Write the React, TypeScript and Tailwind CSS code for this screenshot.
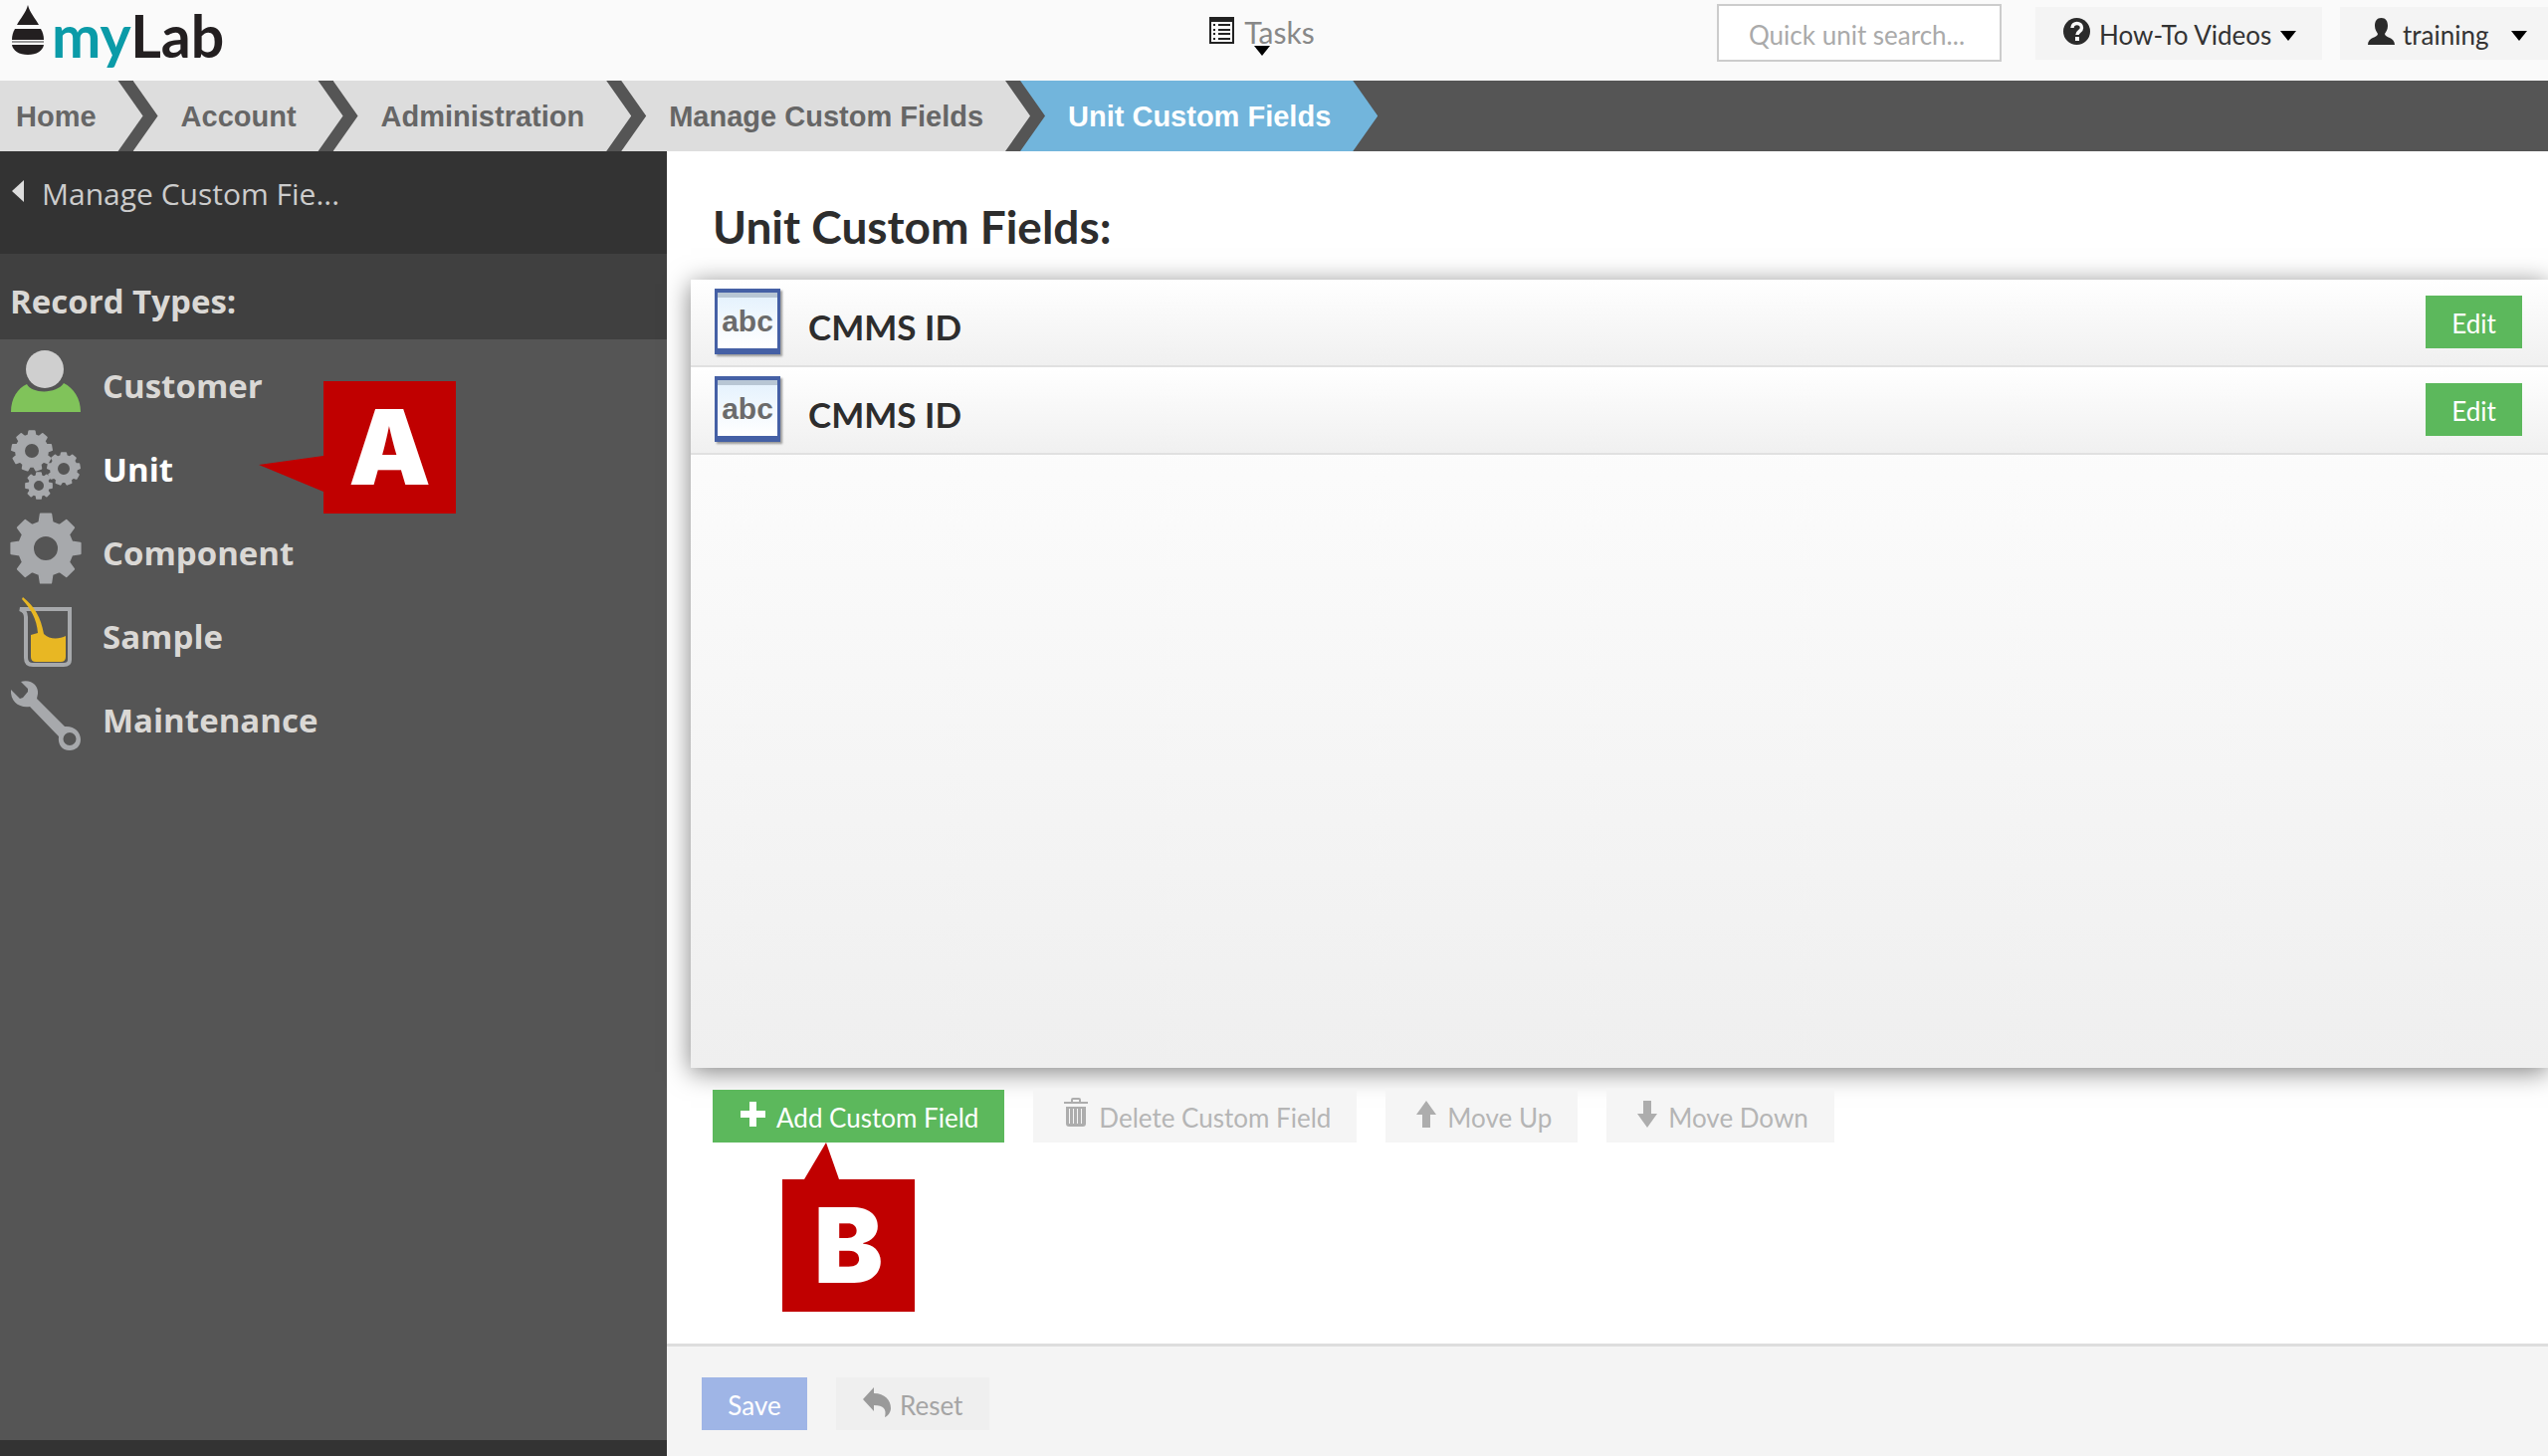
import type { ReactNode } from "react";

const crumbs = ["Home", "Account", "Administration", "Manage Custom Fields", "Unit Custom Fields"];

const fields = [
  { id: 1, name: "CMMS ID" },
  { id: 2, name: "CMMS ID" },
];

function gearPath(cx: number, cy: number, outer: number, inner: number, teeth: number) {
  const step = (Math.PI * 2) / teeth;
  const points: string[] = [];
  for (let i = 0; i < teeth; i++) {
    const mid = i * step - Math.PI / 2;
    const corners: [number, number][] = [
      [inner, -0.31],
      [outer, -0.19],
      [outer, 0.19],
      [inner, 0.31],
    ];
    for (const [r, offset] of corners) {
      const a = mid + offset * step;
      points.push(`${(cx + r * Math.cos(a)).toFixed(2)} ${(cy + r * Math.sin(a)).toFixed(2)}`);
    }
  }
  return `M${points.join("L")}Z`;
}

function holePath(cx: number, cy: number, r: number) {
  return `M${cx - r} ${cy}a${r} ${r} 0 1 0 ${r * 2} 0a${r} ${r} 0 1 0 ${-r * 2} 0Z`;
}

function Gear({ cx, cy, outer, inner, hole, teeth }: {
  cx: number; cy: number; outer: number; inner: number; hole: number; teeth: number;
}) {
  return (
    <path
      d={gearPath(cx, cy, outer - 1, inner, teeth) + holePath(cx, cy, hole + 1)}
      fill="#a7a9ac"
      fillRule="evenodd"
      stroke="#a7a9ac"
      strokeWidth="2"
      strokeLinejoin="round"
    />
  );
}

function RecordIcon({ children }: { children: ReactNode }) {
  return (
    <svg viewBox="0 0 70 70" className="w-[70px] h-[70px] shrink-0 overflow-visible" aria-hidden="true">
      {children}
    </svg>
  );
}

const recordTypes = [
  {
    name: "Customer",
    icon: (
      <RecordIcon>
        <path d="M0 66C0 52 7 42 16 38C21 48 46 48 53 37C63 42 70 52 70 66Z" fill="#80c35a" />
        <circle cx="34" cy="23" r="19" fill="#cfcfcf" />
      </RecordIcon>
    ),
  },
  {
    name: "Unit",
    active: true,
    icon: (
      <RecordIcon>
        <Gear cx={21} cy={21} outer={21} inner={16} hole={7} teeth={9} />
        <Gear cx={53} cy={39} outer={17} inner={13} hole={6} teeth={9} />
        <Gear cx={28} cy={56} outer={14} inner={10} hole={5} teeth={8} />
      </RecordIcon>
    ),
  },
  {
    name: "Component",
    icon: (
      <RecordIcon>
        <Gear cx={35} cy={35} outer={36} inner={27} hole={12} teeth={8} />
      </RecordIcon>
    ),
  },
  {
    name: "Sample",
    icon: (
      <RecordIcon>
        <path d="M9 12H59V63Q59 68 53 68H22Q15 68 15 61V20Q15 14 9 12Z" fill="none" stroke="#a7a9ac" strokeWidth="4" />
        <path d="M12 0C24 10 30 20 33 37C39 43 49 42 55 39V60Q55 65 50 65H25Q20 65 20 60V38L27 36C26 22 20 12 11 2Z" fill="#e8b723" />
      </RecordIcon>
    ),
  },
  {
    name: "Maintenance",
    icon: (
      <RecordIcon>
        <path
          d="M10 1C20 -2 28 5 27 13L26 18L54 46C63 45 70 51 70 59C70 66 65 70 59 70C51 70 47 64 48 56L19 26C9 28 -1 21 0 9L9 18L12 17L17 11V8ZM59 52A6 6 0 1 0 59 65A6 6 0 1 0 59 52Z"
          fill="#a7a9ac"
          fillRule="evenodd"
        />
      </RecordIcon>
    ),
  },
];

function Caret() {
  return (
    <svg viewBox="0 0 16 10" className="w-4 h-[10px] shrink-0 fill-black" aria-hidden="true">
      <path d="M0 0H16L8 10Z" />
    </svg>
  );
}

function Crumb({ label, first, last }: { label: string; first: boolean; last: boolean }) {
  const shape = first
    ? "pl-4 [clip-path:polygon(0_0,calc(100%_-_25px)_0,100%_50%,calc(100%_-_25px)_100%,0_100%)]"
    : "pl-12 -ml-[10px] [clip-path:polygon(0_0,calc(100%_-_25px)_0,100%_50%,calc(100%_-_25px)_100%,0_100%,25px_50%)]";
  const color = last ? "bg-[#72b5dc] text-white" : "bg-[#dddddd] text-[#666666]";
  return (
    <li className={`h-[71px] pr-[47px] pt-0.5 flex items-center ${shape} ${color}`}>
      <a href="#" aria-current={last ? "page" : undefined}>{label}</a>
    </li>
  );
}

function Header() {
  return (
    <header className="h-[81px] bg-[#fafafa] grid grid-cols-[1fr_auto_1fr]">
      <a href="#" className="flex items-start pl-3" aria-label="myLab">
        <svg viewBox="0 0 32 50" className="w-8 h-[50px] mt-[5px] shrink-0" aria-hidden="true">
          <path d="M16 0C18 8 24 14 27 20H5C8 14 14 8 16 0Z" fill="#231f20" />
          <path d="M3 24H29C31 27 32 31 32 35H0C0 31 1 27 3 24Z" fill="#231f20" />
          <path d="M0 36H32V38H0Z" fill="#999999" />
          <path d="M0 40H32C31 46 25 50 16 50C7 50 1 46 0 40Z" fill="#231f20" />
        </svg>
        <span className="pl-2 text-[59px] leading-[72px] font-bold text-[#231f20]">
          <span className="text-[#0b9ba8]">my</span>Lab
        </span>
      </a>
      <nav className="pr-6">
        <a href="#" className="relative flex items-start gap-[10px] pt-[14px] text-[30px] leading-9 text-[#888888]">
          <svg viewBox="0 0 25 27" className="w-[25px] h-[27px] mt-[3px]" aria-hidden="true">
            <path d="M0 0H25V27H0ZM2 5V25H23V5Z" fill="#222222" fillRule="evenodd" />
            <path d="M4 7H6V9H4ZM9 7H21V9H9ZM4 12H6V14H4ZM9 12H21V14H9ZM4 16H6V18H4ZM9 16H21V18H9ZM4 21H6V23H4ZM9 21H21V23H9Z" fill="#222222" />
          </svg>
          Tasks
          <span className="absolute left-[45px] top-[46px] flex">
            <Caret />
          </span>
        </a>
      </nav>
      <div className="flex justify-end items-start text-[26px] text-[#333333]">
        <input
          type="text"
          aria-label="Quick unit search"
          placeholder="Quick unit search..."
          className="mt-1 mr-[34px] w-[286px] h-[58px] px-[30px] pt-1 border-2 border-[#cccccc] bg-white placeholder:text-[#aaaaaa]"
        />
        <button className="mt-[7px] mr-[18px] w-[288px] h-[53px] pl-7 bg-[#f4f4f4] flex items-center gap-[9px]">
          <svg viewBox="0 0 27 27" className="w-[27px] h-[27px] shrink-0 mb-1" aria-hidden="true">
            <circle cx="13.5" cy="13.5" r="13.5" fill="#2b2b2b" />
            <path d="M9 10C9 4 18.500 4 18.500 10C18.500 13.500 14 13.500 14 17" fill="none" stroke="#fafafa" strokeWidth="3.500" />
            <path d="M12 19H16V23H12Z" fill="#fafafa" />
          </svg>
          <span className="pt-1">How-To Videos</span>
          <span className="pt-1">
            <Caret />
          </span>
        </button>
        <button className="mt-[7px] w-[209px] h-[53px] pl-7 bg-[#f4f4f4] flex items-center gap-2">
          <svg viewBox="0 0 27 27" className="w-[27px] h-[27px] shrink-0 mb-1" aria-hidden="true">
            <path d="M13.500 0C18 0 20 3 20 8C20 12 18 14 17 16C17 20 27 19 27 27H0C0 19 10 20 10 16C9 14 7 12 7 8C7 3 9 0 13.500 0Z" fill="#2b2b2b" />
          </svg>
          <span className="pt-1">training</span>
          <span className="ml-[14px] pt-1">
            <Caret />
          </span>
        </button>
      </div>
    </header>
  );
}

function Sidebar() {
  return (
    <aside className="w-[670px] shrink-0 bg-[#555555] border-b-[16px] border-[#333333]">
      <a
        href="#"
        className="h-[103px] pl-3 pt-[25px] flex items-start gap-[18px] bg-[#333333] font-['Open_Sans',sans-serif] text-[30px] leading-9 text-[#cccccc]"
      >
        <svg viewBox="0 0 12 22" className="w-3 h-[22px] mt-1 fill-[#dddddd]" aria-hidden="true">
          <path d="M12 0V22L0 11Z" />
        </svg>
        Manage Custom Fie...
      </a>
      <h2 className="h-[86px] pl-[10px] pt-[10px] flex items-center bg-[#404040] font-['Open_Sans',sans-serif] text-[33px] font-bold text-[#dad8d5]">
        Record Types:
      </h2>
      <ul className="font-['Open_Sans',sans-serif] text-[33px] font-bold">
        {recordTypes.map((type) => (
          <li key={type.name} className="h-[84px] flex items-center">
            <a
              href="#"
              className={`relative pl-[11px] flex items-center gap-[22px] ${type.active ? "text-white" : "text-[#dad8d5]"}`}
            >
              {type.icon}
              <span className="pt-[10px]">{type.name}</span>
              {type.active && (
                <span className="absolute left-[260px] -top-[49px] flex">
                  <svg viewBox="0 0 65 133" className="w-[65px] h-[133px]" aria-hidden="true">
                    <path d="M0 84L65 75V111Z" fill="#c00000" />
                  </svg>
                  <Marker letter="A" />
                </span>
              )}
            </a>
          </li>
        ))}
      </ul>
    </aside>
  );
}

function Marker({ letter }: { letter: string }) {
  return (
    <span className="w-[133px] h-[133px] flex items-center justify-center bg-[#c00000] font-['Inter',sans-serif] text-[104px] leading-[133px] font-black text-white">
      {letter}
    </span>
  );
}

function TextFieldIcon() {
  return (
    <span className="w-[66px] h-[66px] border-x-[3px] border-t-4 border-b-[6px] border-[#4560a5] bg-linear-to-b from-[#e3f1fd] to-white shadow-[2px_2px_2px_#999999]">
      <span className="block h-[52px] border-t-[5px] border-[#b8c6d4] text-center font-['Liberation_Sans_Narrow','Liberation_Sans',sans-serif] text-[30px] leading-[48px] font-bold text-[#6b6b6b]">
        abc
      </span>
    </span>
  );
}

function ActionButton({ icon, label }: { icon: ReactNode; label: string }) {
  return (
    <button disabled className="h-[53px] pl-[31px] pr-[26px] flex items-center gap-[11px] bg-[#f5f5f5] text-[#b5b5b5]">
      {icon}
      <span className="pt-1">{label}</span>
    </button>
  );
}

function ActionBar() {
  return (
    <div className="pl-[46px] mt-[22px] flex gap-[29px] text-[26px]">
      <div className="relative">
        <button className="h-[53px] pl-7 pr-[26px] flex items-center gap-[11px] bg-[#5cb85c] text-white">
          <svg viewBox="0 0 25 25" className="w-[25px] h-[25px] mb-1 fill-white" aria-hidden="true">
            <path d="M9 0H16V9H25V16H16V25H9V16H0V9H9Z" />
          </svg>
          <span className="pt-1">Add Custom Field</span>
        </button>
        <div className="absolute left-[70px] top-[53px]">
          <svg viewBox="0 0 133 37" className="block w-[133px] h-[37px]" aria-hidden="true">
            <path d="M44 0L57 37H22Z" fill="#c00000" />
          </svg>
          <Marker letter="B" />
        </div>
      </div>
      <ActionButton
        label="Delete Custom Field"
        icon={
          <svg viewBox="0 0 24 29" className="w-6 h-[29px] mb-2 fill-[#adadad]" aria-hidden="true">
            <path d="M0 4H7V2Q7 0 9 0H15Q17 0 17 2V4H24V6H0ZM9 4H15V2H9Z" fillRule="evenodd" />
            <path d="M2 9H22V26Q22 29 19 29H5Q2 29 2 26ZM5 11V26H6V11ZM9 11V26H10V11ZM13 11V26H14V11ZM17 11V26H18V11Z" fillRule="evenodd" />
          </svg>
        }
      />
      <ActionButton
        label="Move Up"
        icon={
          <svg viewBox="0 0 20 27" className="w-5 h-[27px] mb-1 fill-[#adadad]" aria-hidden="true">
            <path d="M10 0L20 14H14V27H6V14H0Z" />
          </svg>
        }
      />
      <ActionButton
        label="Move Down"
        icon={
          <svg viewBox="0 0 20 27" className="w-5 h-[27px] mb-1 fill-[#adadad]" aria-hidden="true">
            <path d="M10 27L20 13H14V0H6V13H0Z" />
          </svg>
        }
      />
    </div>
  );
}

export default function App() {
  return (
    <div className="min-h-screen flex flex-col bg-white font-['Lato',sans-serif] overflow-x-hidden">
      <Header />
      <nav aria-label="Breadcrumb" className="bg-[#555555]">
        <ol className="flex font-['Liberation_Sans',sans-serif] text-[29px] font-bold">
          {crumbs.map((label, i) => (
            <Crumb key={label} label={label} first={i === 0} last={i === crumbs.length - 1} />
          ))}
        </ol>
      </nav>

      <div className="flex-1 flex">
        <Sidebar />
        <main className="flex-1 min-w-0 flex flex-col">
          <h1 className="pl-[46px] pt-12 h-[129px] text-[46px] leading-[56px] font-bold text-[#2d2d2d]">
            Unit Custom Fields:
          </h1>

          {/* Field list */}
          <ul className="ml-6 flex-1 bg-linear-to-b from-white to-[#efefef] shadow-[0_4px_24px_rgba(0,0,0,0.5)]">
            {fields.map((field) => (
              <li
                key={field.id}
                className="h-[88px] pl-6 pr-[26px] pb-0.5 flex items-center border-b-2 border-[#e0e0e0] bg-linear-to-b from-white to-[#f0f0f0]"
              >
                <TextFieldIcon />
                <span className="ml-7 pt-[10px] flex-1 text-[35px] leading-10 font-bold text-[#2d2d2d]">{field.name}</span>
                <button className="w-[97px] h-[53px] pt-1 bg-[#5cb85c] text-[26px] text-white">Edit</button>
              </li>
            ))}
          </ul>

          <ActionBar />

          <footer className="mt-[202px] h-[113px] pl-[35px] pt-[31px] flex items-start gap-[29px] border-t-[3px] border-[#dddddd] bg-[#f4f4f4] text-[26px]">
            <button disabled className="w-[106px] h-[53px] pt-1 bg-[#9fb5e6] text-white">Save</button>
            <button disabled className="h-[53px] px-[27px] flex items-center gap-[9px] bg-[#efefef] text-[#a5a5a5]">
              <svg viewBox="0 0 28 30" className="w-7 h-[30px] mb-1 fill-[#9a9a9a]" aria-hidden="true">
                <path d="M0 12L11 0V6C22 6 28 13 28 21C28 25 25 29 22 30C24 22 21 18 11 18V24Z" />
              </svg>
              <span className="pt-1">Reset</span>
            </button>
          </footer>
        </main>
      </div>
    </div>
  );
}
